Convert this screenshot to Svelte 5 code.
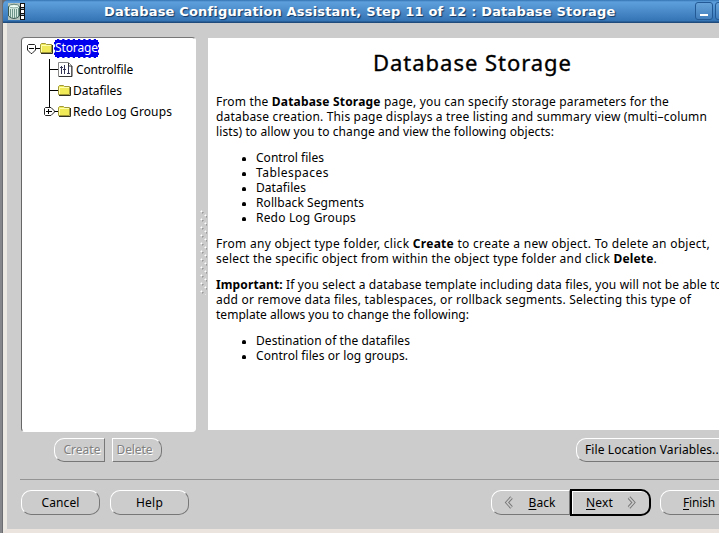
<script>
  // Spreads the letters of an element so that its text fills the given width.
  function fit(node, width) {
    const range = document.createRange();
    range.selectNodeContents(node);
    const natural = range.getBoundingClientRect().width;
    node.style.letterSpacing = `${(width - natural) / node.textContent.length}px`;
  }
  const objects = [['Control files', 68], ['Tablespaces', 73], ['Datafiles', 50], ['Rollback Segments', 108], ['Redo Log Groups', 100]];
  const changes = [['Destination of the datafiles', 154], ['Control files or log groups.', 152]];
</script>

{#snippet folder()}
  <svg class="folder" width="14" height="13" viewBox="0 0 14 13">
    <path d="M.5 10.5V2.5L1.5 1.5H5.5L6.5 2.5H11.5V10.5Z" fill="#f0ea58" stroke="#a09838" />
    <path d="M1.5 10V3.5H11" fill="none" stroke="#ffffb0" />
    <path d="M1 11.5H12.5V3" fill="none" stroke="#333322" />
  </svg>
{/snippet}

<div class="window">
  <header>
    <svg class="appicon" width="17" height="17" viewBox="0 0 17 17">
      <rect width="17" height="17" fill="#b4c4bc" />
      <path d="M.5 3.5Q6-1 11.5 3.5V13Q6 18 .5 13Z" fill="#d6ece2" stroke="#385850" />
      <ellipse cx="6" cy="3.2" rx="4.8" ry="1.7" fill="#effff5" stroke="#668a80" stroke-width=".7" />
      <path d="M2.5 6V14M4.5 6V15M6.5 6V15M8.5 6V15M10.5 5V13" stroke="#6d958a" />
      <path d="M12 0H17V17H12Z" fill="#111" />
      <path d="M13 1H16V4H13ZM13 7H16V10H13ZM13 13H16V16H13Z" fill="#fff" />
      <path d="M13 5.5H16M13 11.5H16" stroke="#9ab" />
    </svg>
    <h1><span use:fit={511}>Database Configuration Assistant, Step 11 of 12 : Database Storage</span></h1>
    <button class="winbtn" aria-label="Minimize"><i></i></button>
    <button class="winbtn next-win" aria-label="Maximize"></button>
  </header>

  <div class="client">
    <main>
      <aside>
        <div class="tree">
          <div class="row root">
            <svg width="13" height="14" viewBox="0 0 13 14"><path d="M1.5 2.5H7.5L8.5 3.5V8L5 11.5H4L.5 8V3.5Z" fill="#fff" stroke="#222"/><path d="M2 6.5H7M9 6.5H13" stroke="#000"/></svg>
            {@render folder()}<span class="selected"><span use:fit={43}>Storage</span></span>
          </div>
          <div class="row child">
            <i class="branch"></i>
            <svg class="control" width="15" height="15" viewBox="0 0 15 15"><path d="M.5.5H10.5L13.5 3.5V14.5H.5Z" fill="#fff" stroke="#888"/><path d="M14 4V14.5H1M10.5 1V4H14" fill="none" stroke="#333"/><path d="M3.5 4V12M6.5 3V12M10.5 4V12M2 5.5H5M5 7.5H8M9 11.5H12" fill="none" stroke="#335"/></svg>
            <span use:fit={57}>Controlfile</span>
          </div>
          <div class="row child"><i class="branch"></i>{@render folder()}<span use:fit={49}>Datafiles</span></div>
          <div class="row child last">
            <svg class="expander" width="14" height="21" viewBox="0 0 14 21"><path d="M5.5 0V6M11 10.5H14" stroke="#000"/><path d="M1.5 6.5H7L10.5 10V11L7 14.5H1.5L.5 13.5V7.5Z" fill="#fff" stroke="#222"/><path d="M2 10.5H8M4.5 8V13" stroke="#000"/></svg>
            {@render folder()}<span use:fit={99}>Redo Log Groups</span>
          </div>
        </div>
        <div class="actions">
          <button class="pill left disabled"><span use:fit={37}>Create</span></button>
          <button class="pill right disabled"><span use:fit={36}>Delete</span></button>
        </div>
      </aside>
      <div class="splitter"><div class="grip"></div></div>
      <section>
        <article>
          <h2><span use:fit={199}>Database Storage</span></h2>
          <p>
            <span use:fit={453}>From the <b>Database Storage</b> page, you can specify storage parameters for the</span>
            <span use:fit={491}>database creation. This page displays a tree listing and summary view (multi–column</span>
            <span use:fit={338}>lists) to allow you to change and view the following objects:</span>
          </p>
          <ul>{#each objects as [label, width]}<li><span use:fit={width}>{label}</span></li>{/each}</ul>
          <p>
            <span use:fit={494}>From any object type folder, click <b>Create</b> to create a new object. To delete an object,</span>
            <span use:fit={441}>select the specific object from within the object type folder and click <b>Delete</b>.</span>
          </p>
          <p>
            <span use:fit={506}><b>Important:</b> If you select a database template including data files, you will not be able to</span>
            <span use:fit={475}>add or remove data files, tablespaces, or rollback segments. Selecting this type of</span>
            <span use:fit={253}>template allows you to change the following:</span>
          </p>
          <ul>{#each changes as [label, width]}<li><span use:fit={width}>{label}</span></li>{/each}</ul>
        </article>
        <button class="pill variables"><span use:fit={137}>File Location Variables...</span></button>
      </section>
    </main>
    <footer>
      <button class="pill cancel"><span use:fit={38}>Cancel</span></button>
      <button class="pill help"><span use:fit={27}>Help</span></button>
      <button class="pill left back">
        <svg width="10" height="13" viewBox="0 0 10 13"><path d="M7.5 1.5 3 6.5 7.5 11.5" fill="none" stroke="#777" stroke-width="3.4"/><path d="M7.5 1.5 3 6.5 7.5 11.5" fill="none" stroke="#ccc" stroke-width="1.6"/></svg>
        <span use:fit={27}><u>B</u>ack</span>
      </button>
      <button class="pill right forward"><span use:fit={27}><u>N</u>ext</span>
        <svg width="10" height="13" viewBox="0 0 10 13"><path d="M2 1.5 6.5 6.5 2 11.5" fill="none" stroke="#777" stroke-width="3.4"/><path d="M2 1.5 6.5 6.5 2 11.5" fill="none" stroke="#ccc" stroke-width="1.6"/></svg>
      </button>
      <button class="pill finish"><span use:fit={32}><u>F</u>inish</span></button>
    </footer>
  </div>
</div>

<style>
  * { box-sizing: border-box; }
  .window { width: 719px; height: 533px; overflow: hidden; display: flex; flex-direction: column; background: #6b6d70; font: 12px/15px "Noto Sans", "Open Sans", sans-serif; color: #000; border-left: 2px solid #85878a; padding-left: 1px; }
  span { white-space: nowrap; }
  button { font: inherit; color: inherit; margin: 0; padding: 0; }
  header { height: 23px; flex: none; display: flex; align-items: flex-start; border-radius: 5px 0 0 0; background: linear-gradient(#3674b2 0, #5d9fdc 2px, #4d8dcc 10px, #3474b5 21px, #1f4b7c 22px); padding: 3px 0 0 5px; }
  .appicon { flex: none; }
  h1 { margin: 1px 0 0 79px; width: 591px; flex: none; font: bold 13px/15px "DejaVu Sans", sans-serif; color: #fff; text-shadow: 1px 1px 1px #123763; }
  .winbtn { width: 18px; height: 18px; flex: none; margin-top: -1px; border: 1px solid #235994; border-radius: 3px; background: linear-gradient(#67a3da, #427fbc); display: flex; align-items: flex-end; justify-content: center; }
  .winbtn i { width: 8px; height: 2px; background: #fff; margin-bottom: 3px; }
  .next-win { margin-left: 2px; }
  .client { flex: 1; display: flex; flex-direction: column; background: #ccc; border-left: 4px solid #ece9e2; border-bottom: 4px solid #ebe3de; box-shadow: inset 0 0 #ccc; padding: 14px 0 0 14px; }
  main { display: flex; height: 443px; border-bottom: 1px solid #949494; flex: none; margin-left: -1px; padding-left: 1px; }
  aside { width: 175px; flex: none; }
  .tree { height: 395px; border: 1px solid; border-color: #777 #fff #fff #666; border-radius: 4px; background: #fff; padding: 0 0 0 5px; }
  .row { height: 21px; display: flex; align-items: center; }
  .row > svg { flex: none; }
  .selected { height: 19px; width: 45px; border: 1px dashed #fff; background: #00e; color: #fff; }
  .child { padding-left: 22px; }
  .branch { width: 9px; height: 21px; flex: none; border-left: 1px solid #000; background: linear-gradient(#000, #000) 0 10px / 9px 1px no-repeat; }
  .last { padding-left: 17px; }
  .control { margin-right: 3px; }
  .folder { margin-right: 1px; }
  .root .folder { margin-right: 0; }
  .actions { display: flex; gap: 7px; padding: 6px 0 0 33px; }
  .pill { height: 25px; display: flex; align-items: center; justify-content: center; flex: none; border: 1px solid; border-color: #fff #777 #777 #fff; border-radius: 10px; background: #ccc; }
  .pill span { position: relative; top: -.5px; }
  .disabled { width: 50px; height: 24px; color: #808080; text-shadow: 1px 1px #fff; padding-left: 3px; }
  .pill.left { border-radius: 10px 0 0 10px; }
  .pill.right { border-radius: 0 10px 10px 0; }
  .disabled.left { width: 51px; padding-left: 5px; }
  .disabled.right { padding: 0 5px 0 0; }
  .splitter { width: 12px; flex: none; padding: 173px 0 0 4px; }
  .grip { width: 7px; height: 85px; background: linear-gradient(#f4f4f4, #f4f4f4) 1px 1px / 8px 8px, radial-gradient(circle at 1.5px 1.5px, #fff .8px, transparent 1.2px) 0 0 / 8px 8px, radial-gradient(circle at 2.5px 2.5px, #999 .8px, transparent 1.3px) 0 0 / 8px 8px, radial-gradient(circle at 1.5px 1.5px, #fff .8px, transparent 1.2px) 4px 4px / 8px 8px, radial-gradient(circle at 2.5px 2.5px, #999 .8px, transparent 1.3px) 4px 4px / 8px 8px; background-size: 0 0, 8px 8px, 8px 8px, 8px 8px, 8px 8px; }
  section { flex: 1; min-width: 0; }
  article { height: 392px; margin-top: 1px; padding: 8px 0 0 8px; background: #fff; overflow: hidden; }
  h2 { font: 22px/32px "Noto Sans", sans-serif; -webkit-text-stroke: .35px #000; text-align: center; margin: 0 0 16px; padding-left: 10px; }
  p { margin: 0 0 11px; display: flex; flex-direction: column; align-items: flex-start; }
  ul { margin: 0 0 11px; padding: 0 0 0 40px; list-style: none; }
  li { display: flex; align-items: center; height: 15px; }
  li::before { content: ""; width: 4px; height: 4px; margin: 3px 10px 0 -14px; background: #000; border-radius: 2px 2px 1px 1px; }
  .variables { width: 180px; height: 24px; margin: 8px 0 0 368px; justify-content: flex-start; padding-left: 8px; }
  footer { display: flex; align-items: center; padding-top: 10px; height: 35px; }
  .cancel { width: 79px; }
  .help { width: 79px; margin-left: 10px; }
  .back { width: 79px; margin-left: 302px; gap: 15px; padding-right: 2px; }
  .forward { width: 81px; height: 27px; border: 2px solid #000; box-shadow: inset 1px 1px #fff; gap: 14px; padding-left: 2px; }
  .finish { width: 78px; margin-left: 9px; }
  u { text-underline-offset: 2px; }
</style>
